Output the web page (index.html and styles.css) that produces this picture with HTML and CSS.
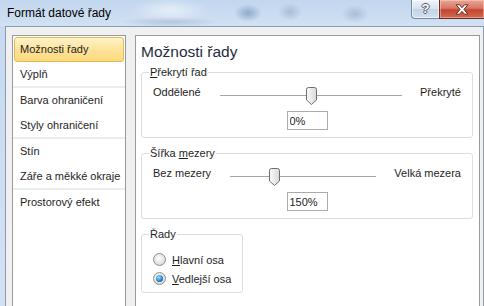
FILE: index.html
```html
<!DOCTYPE html>
<html lang="cs">
  <head>
    <meta charset="UTF-8" />
    <title>Formát datové řady</title>
    <link rel="stylesheet" href="styles.css">
  </head>
  <body>
    <div class="window">
      <header class="titlebar">
        <span class="title">Formát datové řady</span>
        <div class="caption-buttons">
          <span class="btn-help">?</span>
          <span class="btn-close">
            <svg width="14" height="11" viewBox="0 0 14 11">
              <path d="M1 0.8h3.6l2.4 2.9 2.4-2.9H13l-4.1 4.6L13 10.2H9.4L7 7.3 4.6 10.2H1l4.1-4.8z" fill="#ffffff" stroke="#6e2c22" stroke-width="1" stroke-linejoin="round" />
            </svg>
          </span>
        </div>
      </header>

      <div class="client">
        <ul class="nav">
          <li class="nav-item active">Možnosti řady</li>
          <li class="nav-item">Výplň</li>
          <li class="nav-sep"></li>
          <li class="nav-item">Barva ohraničení</li>
          <li class="nav-item">Styly ohraničení</li>
          <li class="nav-sep"></li>
          <li class="nav-item">Stín</li>
          <li class="nav-item">Záře a měkké okraje</li>
          <li class="nav-sep"></li>
          <li class="nav-item">Prostorový efekt</li>
        </ul>

        <div class="panel">
          <h1 class="panel-title">Možnosti řady</h1>

          <fieldset class="group">
            <legend><u>P</u>řekrytí řad</legend>
            <div class="slider-row">
              <span>Oddělené</span>
              <div class="track">
                <svg class="thumb" style="left: 50%" width="11" height="18" viewBox="0 0 11 18">
                  <defs>
                    <linearGradient id="thumb-a" x1="0" x2="1">
                      <stop offset="0" stop-color="#fbfbfb" />
                      <stop offset="1" stop-color="#d9d9d9" />
                    </linearGradient>
                  </defs>
                  <path d="M0.5 2.5Q0.5 0.5 2.5 0.5H8.5Q10.5 0.5 10.5 2.5V13L5.5 17.5 0.5 13Z" fill="url(#thumb-a)" stroke="#6f6f6f" />
                </svg>
              </div>
              <span>Překryté</span>
            </div>
            <input class="value" type="text" value="0%" readonly />
          </fieldset>

          <fieldset class="group">
            <legend>Šířka <u>m</u>ezery</legend>
            <div class="slider-row">
              <span>Bez mezery</span>
              <div class="track">
                <svg class="thumb" style="left: 30%" width="11" height="18" viewBox="0 0 11 18">
                  <defs>
                    <linearGradient id="thumb-b" x1="0" x2="1">
                      <stop offset="0" stop-color="#fbfbfb" />
                      <stop offset="1" stop-color="#d9d9d9" />
                    </linearGradient>
                  </defs>
                  <path d="M0.5 2.5Q0.5 0.5 2.5 0.5H8.5Q10.5 0.5 10.5 2.5V13L5.5 17.5 0.5 13Z" fill="url(#thumb-b)" stroke="#6f6f6f" />
                </svg>
              </div>
              <span>Velká mezera</span>
            </div>
            <input class="value" type="text" value="150%" readonly />
          </fieldset>

          <fieldset class="group group-small">
            <legend>Řady</legend>
            <label class="radio-row">
              <span class="radio"></span>
              <span><u>H</u>lavní osa</span>
            </label>
            <label class="radio-row">
              <span class="radio checked"></span>
              <span><u>V</u>edlejší osa</span>
            </label>
          </fieldset>
        </div>
      </div>
    </div>
  </body>
</html>
```

FILE: styles.css
```css
* {
  margin: 0;
  padding: 0;
  box-sizing: border-box;
}

body {
  width: 484px;
  height: 306px;
  overflow: hidden;
  font-family: "Liberation Sans", Arial, sans-serif;
  font-size: 11px;
  color: #1e1e1e;
  background: linear-gradient(180deg, #c6d9ef, #d3e2f3);
}

.window {
  height: 306px;
  display: flex;
  flex-direction: column;
}

/* aero title bar */
.titlebar {
  height: 26px;
  display: flex;
  justify-content: space-between;
  align-items: flex-start;
  background:
    radial-gradient(ellipse 14px 9px at 248px 13px, rgba(70, 110, 160, 0.45), transparent),
    radial-gradient(ellipse 12px 9px at 290px 12px, rgba(90, 120, 160, 0.3), transparent),
    radial-gradient(ellipse 14px 9px at 355px 14px, rgba(90, 120, 160, 0.3), transparent),
    radial-gradient(ellipse 50px 5px at 170px 22px, rgba(120, 150, 190, 0.35), transparent),
    radial-gradient(ellipse 40px 12px at 170px 10px, rgba(240, 246, 252, 0.7), transparent),
    linear-gradient(180deg, #c2d6ee, #d2e1f3);
}

.title {
  font-size: 12px;
  line-height: 26px;
  padding-left: 7px;
  color: #000000;
}

.caption-buttons {
  display: flex;
}

.btn-help {
  width: 28px;
  height: 19px;
  border: 1px solid #7388a4;
  border-top: 0;
  border-right: 0;
  border-radius: 0 0 0 4px;
  background: linear-gradient(180deg, #eef3f9, #d6e2ef 50%, #c3d3e6 51%, #d2e0ef);
  box-shadow: inset 0 0 0 1px rgba(255, 255, 255, 0.6);
  color: #ffffff;
  font-weight: bold;
  font-size: 13px;
  line-height: 18px;
  text-align: center;
  text-shadow: 1px 0 0 #4d5b6e, -1px 0 0 #4d5b6e, 0 1px 0 #4d5b6e, 0 -1px 0 #4d5b6e;
}

.btn-close {
  width: 45px;
  height: 19px;
  display: flex;
  align-items: center;
  justify-content: center;
  border: 1px solid #6b2b26;
  border-top: 0;
  border-right: 0;
  background: linear-gradient(180deg, #e8a596, #d87866 45%, #c4452f 55%, #d36a50);
  box-shadow: inset 0 0 0 1px rgba(255, 220, 210, 0.45);
}

/* dialog body */
.client {
  flex: 1;
  min-height: 0;
  margin-left: 5px;
  display: flex;
  gap: 9px;
  padding: 8px 3px 0 6px;
  background: #f0f0f0;
  border: 1px solid #8a9bb1;
  border-bottom: 0;
}

.nav {
  width: 114px;
  list-style: none;
  padding: 1px;
  background: #ffffff;
  border: 1px solid #9a9a9a;
  border-bottom: 0;
}

.nav-item {
  height: 24.5px;
  line-height: 23px;
  padding-left: 5px;
  border: 1px solid transparent;
  border-radius: 3px;
  white-space: nowrap;
}

.nav-item.active {
  background: linear-gradient(180deg, #fef3c8, #fde59e 45%, #fcd97c);
  border-color: #e3bb5c;
}

.nav-sep {
  height: 2px;
  margin: 0 -1px;
  background: #ececec;
}

.panel {
  width: 345px;
  padding: 6px 6px 0 5px;
  background: #ffffff;
  border: 1px solid #9a9a9a;
  border-bottom: 0;
}

.panel-title {
  font-size: 15.5px;
  font-weight: normal;
  line-height: 20px;
  color: #1f2d40;
  margin-bottom: 3px;
}

.group {
  border: 1px solid #d5dfe5;
  border-radius: 3px;
  padding: 6px 11px 7px;
}

.group + .group {
  margin-top: 8px;
}

.group legend {
  margin-left: -4px;
  padding: 0 1px;
  line-height: 14px;
}

.slider-row {
  display: flex;
  align-items: flex-start;
  white-space: nowrap;
}

.slider-row span {
  line-height: 14px;
}

.track {
  flex: 1;
  position: relative;
  height: 19px;
  margin: 2px 18px 0 19px;
}

.track::before {
  content: "";
  position: absolute;
  left: 0;
  right: 0;
  top: 8px;
  height: 1px;
  background: #a6a6a6;
}

.thumb {
  position: absolute;
  top: 0;
  margin-left: -5px;
}

.value {
  display: block;
  width: 41px;
  height: 19px;
  margin: 5px auto 0;
  padding: 0 2px;
  border: 1px solid #a9abb0;
  font-family: inherit;
  font-size: 11px;
  color: #1e1e1e;
  outline: none;
}

.group-small {
  width: 99px;
  padding: 9px 11px 4px;
}

.radio-row {
  display: flex;
  align-items: center;
  gap: 6px;
  height: 19px;
  white-space: nowrap;
}

.radio {
  position: relative;
  flex: none;
  width: 13px;
  height: 13px;
  border-radius: 50%;
  border: 1px solid #8e8f8f;
  background: radial-gradient(circle at 45% 40%, #ffffff, #dcdcdc 70%, #c8c8c8);
}

.radio.checked::after {
  content: "";
  position: absolute;
  left: 2px;
  top: 2px;
  width: 7px;
  height: 7px;
  border-radius: 50%;
  background: radial-gradient(circle at 40% 35%, #9fdcff, #2a86cf 55%, #0d3f70);
}
```
